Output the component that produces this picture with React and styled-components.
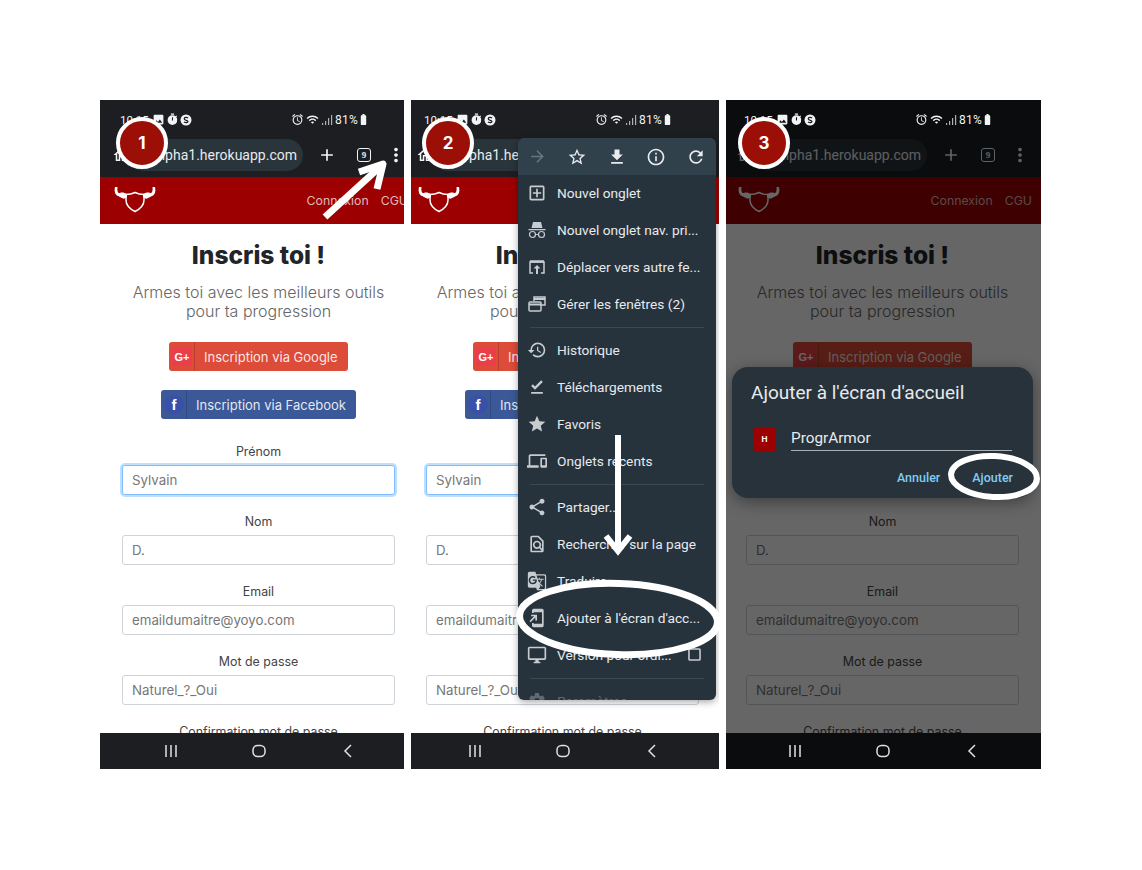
import React from "react";
import styled, { createGlobalStyle } from "styled-components";
import {
  MdOutlineHome, MdAdd, MdMoreVert, MdImage, MdTimer, MdAlarm, MdWifi, MdBatteryFull,
  MdArrowForward, MdStarBorder, MdFileDownload, MdInfoOutline, MdRefresh,
  MdOutlineAddBox, MdHistory, MdFileDownloadDone, MdStar, MdOutlineDevices,
  MdShare, MdOutlineFindInPage, MdGTranslate, MdAddToHomeScreen,
  MdOutlineDesktopWindows, MdSettings, MdCropSquare,
} from "react-icons/md";

const Global = createGlobalStyle`
  html, body { margin: 0; padding: 0; background: #fff; }
  body { font-family: "Inter", "Liberation Sans", sans-serif; }
  * { box-sizing: border-box; }
`;

const Page = styled.div`
  width: 1142px;
  height: 870px;
  padding: 100px 0 0 100px;
  display: flex;
  gap: 7px;
  background: #fff;
`;

const Phone = styled.section`
  position: relative;
  flex: none;
  width: ${(p) => p.$width}px;
  height: 669px;
  overflow: hidden;
`;

const Screen = styled.div`
  width: 317px;
  height: 669px;
  margin-left: ${(p) => p.$shift}px;
  display: flex;
  flex-direction: column;
  background: #fff;
`;

const TopBar = styled.div`
  flex: none;
  height: 77px;
  background: #1c1e21;
  color: #f1f3f4;
`;

const StatusRow = styled.div`
  position: relative;
  z-index: 2;
  height: 39px;
  padding: 0 0 0 20px;
  display: flex;
  align-items: center;
  gap: 1px;
  font: 400 11.5px "Roboto", sans-serif;
  color: #f1f3f4;
  svg { flex: none; }
`;

const Clock = styled.span`
  width: 31px;
`;

const StatusRight = styled.div`
  margin-left: 98px;
  display: flex;
  align-items: center;
  gap: 2px;
  font-size: 12px;
  letter-spacing: 0.2px;
`;

const BatteryWrap = styled.span`
  display: flex;
  margin-left: -3px;
`;

const Toolbar = styled.div`
  height: 32px;
  padding: 0 0 0 12px;
  display: flex;
  align-items: center;
  color: #f1f3f4;
`;

const UrlPill = styled.div`
  width: 175px;
  height: 32px;
  margin: 0 0 0 -2px;
  padding: 0 6px 0 0;
  border-radius: 16px;
  background: #29343b;
  display: flex;
  align-items: center;
  justify-content: flex-end;
  font: 400 14px "Roboto", sans-serif;
  white-space: nowrap;
  color: #e8eaed;
`;

const ToolIcons = styled.div`
  display: flex;
  align-items: center;
  gap: 20px;
  padding-left: 14px;
`;

const TabCount = styled.span`
  width: 14px;
  height: 14px;
  margin-right: -6px;
  border: 1.6px solid #f1f3f4;
  border-radius: 3px;
  display: flex;
  align-items: center;
  justify-content: center;
  font: 700 9px "Liberation Serif", serif;
`;

const SiteHeader = styled.header`
  flex: none;
  height: 47px;
  padding: 8px 9px 0 14px;
  display: flex;
  justify-content: space-between;
  background: #9c0000;
`;

const SiteLinks = styled.nav`
  display: flex;
  gap: 12px;
  padding-top: 8px;
  font-size: 12.3px;
  color: rgba(255, 255, 255, 0.72);
`;

const Main = styled.main`
  flex: 1;
  min-height: 0;
  overflow: hidden;
  padding: 16px 22px 0;
  text-align: center;
`;

const Title = styled.h1`
  margin: 0;
  font-size: 24.5px;
  line-height: 30px;
  font-weight: 800;
  color: #212529;
`;

const Lead = styled.p`
  margin: 13px -4px 21px;
  font-size: 16px;
  line-height: 19px;
  font-weight: 300;
  color: #666;
`;

const SocialButton = styled.div`
  width: ${(p) => p.$width}px;
  height: 29px;
  margin: 0 auto 19px;
  padding: 0 3px;
  display: flex;
  align-items: center;
  border-radius: 3px;
  background: ${(p) => p.$color};
  color: rgba(255, 255, 255, 0.88);
  font-size: 13px;
  white-space: nowrap;
`;

const SocialMark = styled.span`
  flex: none;
  width: 20px;
  height: 19px;
  display: flex;
  align-items: center;
  justify-content: center;
  border-radius: ${(p) => p.$radius};
  background: ${(p) => p.$color};
  color: #fff;
  font: 700 ${(p) => p.$size}px "Liberation Sans", sans-serif;
`;

const SocialLabel = styled.span`
  flex: 1;
  height: 100%;
  margin-left: 2px;
  padding-left: 9px;
  display: flex;
  align-items: center;
  border-left: 1px solid rgba(0, 0, 0, 0.16);
`;

const Field = styled.div`
  margin-bottom: 19px;
`;

const FieldsTop = styled.div`
  padding-top: 6px;
`;

const Label = styled.label`
  display: block;
  margin-bottom: 5px;
  font-size: 12.4px;
  line-height: 16px;
  color: #444;
`;

const Input = styled.input`
  display: block;
  width: 100%;
  height: 30px;
  padding: 0 9px;
  border-radius: 3px;
  border: 1px solid ${(p) => (p.$focused ? "#80bdff" : "#ced4da")};
  box-shadow: ${(p) => (p.$focused ? "0 0 0 2px #bfdfff" : "none")};
  outline: none;
  background: #fff;
  color: #777;
  font: 400 13.3px "Inter", sans-serif;
`;

const NavBar = styled.div`
  flex: none;
  height: 36px;
  padding: 0 25px 0 27px;
  display: grid;
  grid-template-columns: repeat(3, 1fr);
  place-items: center;
  background: #1c1e21;
`;

const NavIcon = styled.svg`
  position: relative;
  z-index: 2;
  display: block;
`;

const Badge = styled.div`
  position: absolute;
  z-index: 3;
  top: 17px;
  left: ${(p) => p.$left}px;
  width: 52px;
  height: 52px;
  border: 4px solid #fff;
  border-radius: 50%;
  background: #9b0f06;
  color: #fff;
  display: flex;
  align-items: center;
  justify-content: center;
  font: 700 17px "Inter", sans-serif;
`;

const Mark = styled.svg`
  position: absolute;
  z-index: 4;
  left: ${(p) => p.$left}px;
  top: ${(p) => p.$top}px;
  overflow: visible;
  fill: none;
  stroke: #fff;
`;

const Scrim = styled.div`
  position: absolute;
  inset: 0;
  z-index: 1;
  background: rgba(0, 0, 0, 0.6);
`;

const Menu = styled.div`
  position: absolute;
  z-index: 3;
  left: 107px;
  top: 38px;
  width: 198px;
  height: 562px;
  overflow: hidden;
  border-radius: 6px;
  background: #26333d;
  box-shadow: 0 2px 7px rgba(0, 0, 0, 0.35);
  color: #e8eaed;
  font: 400 13.7px "Roboto", sans-serif;
`;

const MenuTop = styled.div`
  height: 37px;
  padding: 0 10px;
  display: flex;
  align-items: center;
  justify-content: space-between;
  background: #30414c;
  color: #e8eaed;
`;

const MenuItem = styled.div`
  height: 37px;
  padding: 0 12px 2px 9px;
  display: flex;
  align-items: center;
  gap: 10px;
  white-space: nowrap;
  color: ${(p) => (p.$muted ? "#5e6a72" : "#e8eaed")};
  svg { flex: none; color: ${(p) => (p.$muted ? "#5e6a72" : "#c7ccd0")}; }
`;

const MenuText = styled.span`
  flex: 1;
`;

const MenuRule = styled.hr`
  height: 1px;
  margin: 4px 12px;
  border: 0;
  background: #3b4852;
`;

const Dialog = styled.div`
  position: absolute;
  z-index: 3;
  left: 6px;
  top: 267px;
  width: 301px;
  height: 131px;
  padding: 14px 19px 0;
  border-radius: 16px;
  background: #27323a;
  box-shadow: 0 4px 16px rgba(0, 0, 0, 0.4);
  color: #e8eaed;
  font-family: "Roboto", sans-serif;
`;

const DialogTitle = styled.h2`
  margin: 0;
  font-size: 19px;
  line-height: 24px;
  font-weight: 400;
`;

const DialogRow = styled.div`
  margin-top: 22px;
  display: flex;
  align-items: center;
  gap: 15px;
`;

const Favicon = styled.span`
  flex: none;
  width: 23px;
  height: 24px;
  margin-left: 2px;
  border-radius: 2px;
  background: #9c0000;
  color: #fff;
  font: 700 8px "Inter", sans-serif;
  display: flex;
  align-items: center;
  justify-content: center;
`;

const AppName = styled.div`
  flex: 1;
  height: 24px;
  margin-right: 2px;
  padding-top: 3px;
  border-bottom: 1px solid #a9b0b5;
  font-size: 15.3px;
  line-height: 16px;
`;

const DialogActions = styled.div`
  margin: 19px 1px 0 0;
  display: flex;
  justify-content: flex-end;
  gap: 32px;
  font-size: 12.5px;
  font-weight: 500;
  color: #7fcdf5;
`;

const Logo = ({ color = "#fff" }) => (
  <svg width="42" height="28" viewBox="0 0 42 28">
    <path fill={color} d="M1 2C0 6 1 10 4 11L9 13.500C10 14 12 13 13 12L13 9C11 8 8 7 6 8C4 8.500 3 6 3.500 2Z" />
    <path fill={color} d="M41 2C42 6 41 10 38 11L33 13.500C32 14 30 13 29 12L29 9C31 8 34 7 36 8C38 8.500 39 6 38.500 2Z" />
    <path fill="none" stroke={color} strokeWidth="1.500" d="M21 7.500C24 9 27 9.500 30 9.500V15C30 20 26 24 21 26.500C16 24 12 20 12 15V9.500C15 9.500 18 9 21 7.500Z" />
  </svg>
);

const Signal = () => (
  <svg width="12" height="12" viewBox="0 0 12 12" fill="#aeb1b4">
    <rect x="1" y="9" width="1.200" height="2" />
    <rect x="4" y="7" width="1.200" height="4" />
    <rect x="7" y="4" width="1.200" height="7" />
    <rect x="10" y="1" width="1.200" height="10" />
  </svg>
);

const CircleS = () => (
  <svg width="12" height="12" viewBox="0 0 12 12">
    <circle cx="6" cy="6" r="5.500" fill="#f1f3f4" />
    <path d="M8 4.200C7 3 4.200 3.200 4.200 4.800S8 6.200 8 7.600 5 9 4 7.800" fill="none" stroke="#1c1e21" strokeWidth="1.200" />
  </svg>
);

const Incognito = () => (
  <svg width="20" height="20" viewBox="0 0 20 20" fill="none" stroke="currentColor" strokeWidth="1.200">
    <path fill="currentColor" stroke="none" d="M6 2h8l1.500 6h-11zM1.500 9h17v1.300h-17z" />
    <circle cx="5.500" cy="14.500" r="3" />
    <circle cx="14.500" cy="14.500" r="3" />
    <path d="M8.500 14.500h3" />
  </svg>
);

const MoveWindow = () => (
  <svg width="20" height="20" viewBox="0 0 20 20" fill="none" stroke="currentColor" strokeWidth="1.500">
    <path d="M6 16H3V5h14v11h-3" />
    <path d="M3 4.500h14" strokeWidth="2.500" />
    <path fill="currentColor" stroke="none" d="M10 8l3.500 3.500H11V17H9v-5.500H6.500z" />
  </svg>
);

const Windows = () => (
  <svg width="20" height="20" viewBox="0 0 20 20" fill="none" stroke="currentColor" strokeWidth="1.500">
    <path d="M7 7V3h11v8h-4" />
    <path d="M7 5h11" strokeWidth="2" />
    <rect x="2" y="8" width="12" height="9" rx="1" />
    <path d="M2 10.500h12" strokeWidth="2" />
  </svg>
);

const StatusBar = () => (
  <StatusRow>
    <Clock>10:15</Clock>
    <MdImage size={13} />
    <MdTimer size={13} />
    <CircleS />
    <StatusRight>
      <MdAlarm size={13} />
      <MdWifi size={13} />
      <Signal />
      <span>81%</span>
      <BatteryWrap>
        <MdBatteryFull size={13} />
      </BatteryWrap>
    </StatusRight>
  </StatusRow>
);

const ChromeBar = () => (
  <Toolbar>
    <MdOutlineHome size={18} />
    <UrlPill>alpha1.herokuapp.com</UrlPill>
    <ToolIcons>
      <MdAdd size={20} />
      <TabCount>9</TabCount>
      <MdMoreVert size={22} />
    </ToolIcons>
  </Toolbar>
);

const fields = [
  { label: "Prénom", value: "Sylvain", focused: true },
  { label: "Nom", value: "D." },
  { label: "Email", value: "emaildumaitre@yoyo.com" },
  { label: "Mot de passe", value: "Naturel_?_Oui" },
  { label: "Confirmation mot de passe", value: "" },
];

const SignupPage = () => (
  <Main>
    <Title>Inscris toi !</Title>
    <Lead>Armes toi avec les meilleurs outils<br />pour ta progression</Lead>
    <SocialButton $width={179} $color="#dd4b39">
      <SocialMark $color="#ea3f4a" $radius="2px" $size={11}>G+</SocialMark>
      <SocialLabel>Inscription via Google</SocialLabel>
    </SocialButton>
    <SocialButton $width={195} $color="#3b5998">
      <SocialMark $color="#3a4fa8" $radius="50%" $size={15}>f</SocialMark>
      <SocialLabel>Inscription via Facebook</SocialLabel>
    </SocialButton>
    <FieldsTop>
      {fields.map((f) => (
        <Field key={f.label}>
          <Label>{f.label}</Label>
          <Input readOnly value={f.value} $focused={f.focused} />
        </Field>
      ))}
    </FieldsTop>
  </Main>
);

const BottomNav = () => (
  <NavBar>
    <NavIcon width="14" height="14" viewBox="0 0 14 14" stroke="#dfe1e3" strokeWidth="1.500">
      <path d="M2 1v12M7 1v12M12 1v12" />
    </NavIcon>
    <NavIcon width="16" height="14" viewBox="0 0 16 14" fill="none" stroke="#dfe1e3" strokeWidth="1.500">
      <rect x="2" y="1.500" width="12" height="11" rx="4.500" />
    </NavIcon>
    <NavIcon width="10" height="14" viewBox="0 0 10 14" fill="none" stroke="#dfe1e3" strokeWidth="1.500">
      <path d="M8 1L2 7l6 6" />
    </NavIcon>
  </NavBar>
);

const PhoneScreen = () => (
  <>
    <TopBar>
      <StatusBar />
      <ChromeBar />
    </TopBar>
    <SiteHeader>
      <Logo />
      <SiteLinks>
        <span>Connexion</span>
        <span>CGU</span>
      </SiteLinks>
    </SiteHeader>
    <SignupPage />
    <BottomNav />
  </>
);

const menuGroups = [
  [
    { Icon: MdOutlineAddBox, text: "Nouvel onglet" },
    { Icon: Incognito, text: "Nouvel onglet nav. pri..." },
    { Icon: MoveWindow, text: "Déplacer vers autre fe..." },
    { Icon: Windows, text: "Gérer les fenêtres (2)" },
  ],
  [
    { Icon: MdHistory, text: "Historique" },
    { Icon: MdFileDownloadDone, text: "Téléchargements" },
    { Icon: MdStar, text: "Favoris" },
    { Icon: MdOutlineDevices, text: "Onglets récents" },
  ],
  [
    { Icon: MdShare, text: "Partager..." },
    { Icon: MdOutlineFindInPage, text: "Rechercher sur la page" },
    { Icon: MdGTranslate, text: "Traduire..." },
    { Icon: MdAddToHomeScreen, text: "Ajouter à l'écran d'acc..." },
    { Icon: MdOutlineDesktopWindows, text: "Version pour ordi...", check: true },
  ],
  [{ Icon: MdSettings, text: "Paramètres", muted: true }],
];

const BrowserMenu = () => (
  <Menu>
    <MenuTop>
      <MdArrowForward size={19} color="#68757e" />
      <MdStarBorder size={20} />
      <MdFileDownload size={20} />
      <MdInfoOutline size={20} />
      <MdRefresh size={20} />
    </MenuTop>
    {menuGroups.map((group, i) => (
      <React.Fragment key={i}>
        {i > 0 && <MenuRule />}
        {group.map(({ Icon, text, check, muted }) => (
          <MenuItem key={text} $muted={muted}>
            <Icon size={20} />
            <MenuText>{text}</MenuText>
            {check && <MdCropSquare size={19} />}
          </MenuItem>
        ))}
      </React.Fragment>
    ))}
  </Menu>
);

const AddDialog = () => (
  <Dialog>
    <DialogTitle>Ajouter à l'écran d'accueil</DialogTitle>
    <DialogRow>
      <Favicon>H</Favicon>
      <AppName>ProgrArmor</AppName>
    </DialogRow>
    <DialogActions>
      <span>Annuler</span>
      <span>Ajouter</span>
    </DialogActions>
  </Dialog>
);

export default function App() {
  return (
    <Page>
      <Global />
      <Phone $width={304}>
        <Screen $shift={0}>
          <PhoneScreen />
        </Screen>
        <Badge $left={16}>1</Badge>
        <Mark $left={215} $top={55} width="80" height="70" strokeWidth="7">
          <path d="M10 62L66 11" />
          <path d="M44 17l24-8-6 25" strokeLinejoin="round" />
        </Mark>
      </Phone>

      <Phone $width={308}>
        <Screen $shift={-7}>
          <PhoneScreen />
        </Screen>
        <Badge $left={11}>2</Badge>
        <BrowserMenu />
        <Mark $left={189} $top={330} width="36" height="130" strokeWidth="6">
          <path d="M18 5v115" />
          <path d="M6 106l12 15 12-15" />
        </Mark>
        <Mark $left={100} $top={480} width="215" height="80" strokeWidth="7">
          <ellipse cx="107.500" cy="39" rx="99" ry="35.500" transform="rotate(2 107.500 39)" />
        </Mark>
      </Phone>

      <Phone $width={315}>
        <Screen $shift={-2}>
          <PhoneScreen />
        </Screen>
        <Scrim />
        <Badge $left={12}>3</Badge>
        <AddDialog />
        <Mark $left={218} $top={350} width="100" height="54" strokeWidth="6">
          <ellipse cx="50" cy="26.500" rx="43" ry="20.500" transform="rotate(3 50 26.500)" />
        </Mark>
      </Phone>
    </Page>
  );
}
